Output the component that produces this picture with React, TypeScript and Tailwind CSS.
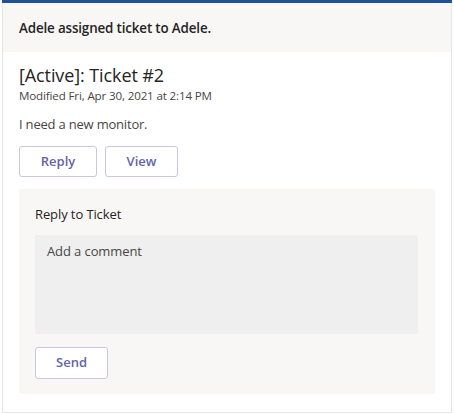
import React from "react";

export default function App() {
  const font = { fontFamily: '"Open Sans", "Noto Sans", sans-serif' };
  return (
    <div className="w-[454px] h-[414px] bg-white pl-[2px] pr-[2px]" style={font}>
      <div className="w-[450px] h-[413px] border-x border-b border-[#e6e6e6] flex flex-col">
        <div className="h-[3px] bg-[#1d5299] -mx-px" />
        <div className="h-[49px] bg-[#f8f7f6] flex items-center pl-[16px] pt-[1px] text-[13.4px] font-semibold text-[#252424] tracking-[-0.15px]">
          Adele assigned ticket to Adele.
        </div>
        <div className="flex flex-col px-[16px] pt-[11px]">
          <div className="text-[18px] leading-[24px] text-[#252424] tracking-[-0.1px]">[Active]: Ticket #2</div>
          <div className="mt-[1px] text-[11.6px] leading-[15px] text-[#484644] tracking-[-0.15px]">Modified Fri, Apr 30, 2021 at 2:14 PM</div>
          <div className="mt-[13px] text-[13px] leading-[16px] text-[#484644] tracking-[-0.2px]">I need a new monitor.</div>
          <div className="mt-[14px] flex gap-[8px]">
            <button className="w-[78px] h-[31px] border border-[#c8c6e2] rounded-[3px] bg-white text-[13px] font-semibold text-[#6264a7]">Reply</button>
            <button className="w-[73px] h-[31px] border border-[#c8c6e2] rounded-[3px] bg-white text-[13px] font-semibold text-[#6264a7]">View</button>
          </div>
          <div className="mt-[12px] w-[416px] h-[205px] bg-[#f8f7f6] rounded-[2px] flex flex-col px-[16px] pt-[16px]">
            <div className="text-[13px] leading-[18px] text-[#252424] tracking-[-0.1px]">Reply to Ticket</div>
            <div className="mt-[12px] w-[383px] h-[99px] bg-[#efefef] rounded-[2px] pl-[12px] pt-[7px] text-[13px] leading-[18px] text-[#484644] tracking-[-0.1px]">
              Add a comment
            </div>
            <button className="mt-[13px] w-[73px] h-[32px] border border-[#c8c6e2] rounded-[3px] bg-white text-[13px] font-semibold text-[#6264a7]">Send</button>
          </div>
        </div>
      </div>
    </div>
  );
}
